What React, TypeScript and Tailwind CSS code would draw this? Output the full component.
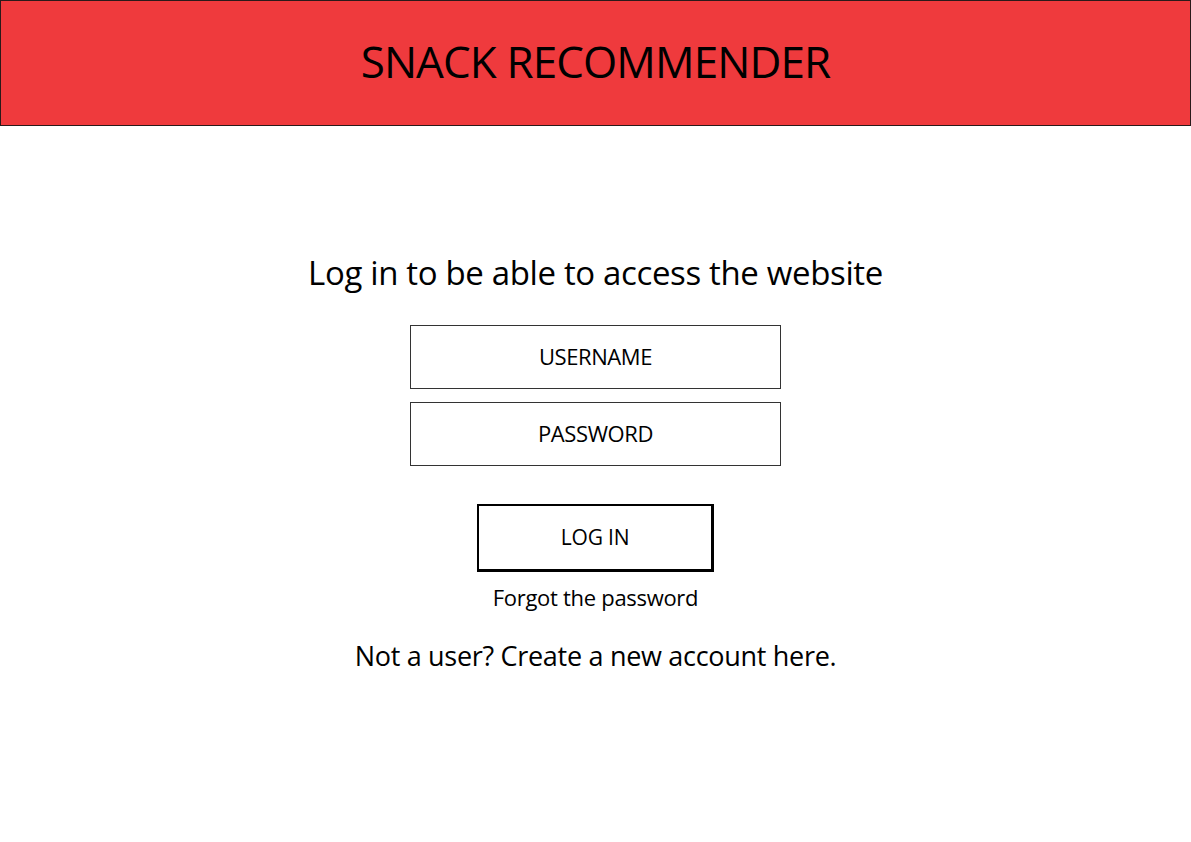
export default function App() {
  return (
    <div className="min-h-[842px] w-[1191px] bg-white font-['Open_Sans',sans-serif] text-black">
      {/* Header */}
      <header className="h-[126px] bg-[#ef3a3d] border border-[#2a1a1a] flex items-center justify-center">
        <h1 className="text-[44px] font-normal tracking-[-0.9px] leading-none -mt-[4px]">SNACK RECOMMENDER</h1>
      </header>

      <main className="flex flex-col items-center pt-[130px]">
        <h2 className="text-[33px] leading-none tracking-[-0.35px]">Log in to be able to access the website</h2>

        <div className="mt-[36px] flex flex-col gap-[13px]">
          <div className="w-[371px] h-[64px] border border-[#333] flex items-center justify-center text-[22px] tracking-[-0.4px] pb-[2px]">
            USERNAME
          </div>
          <div className="w-[371px] h-[64px] border border-[#333] flex items-center justify-center text-[22px] tracking-[-0.4px] pb-[2px]">
            PASSWORD
          </div>
        </div>

        <button className="mt-[38px] w-[237px] h-[68px] border-2 border-r-[3px] border-b-[3px] border-black flex items-center justify-center text-[21px] tracking-[-0.2px]">
          LOG IN
        </button>
        <p className="mt-[14px] text-[22px] leading-none tracking-[-0.3px]">Forgot the password</p>

        <p className="mt-[34px] text-[27px] leading-none tracking-[-0.3px]">Not a user? Create a new account here.</p>
      </main>
    </div>
  )
}
